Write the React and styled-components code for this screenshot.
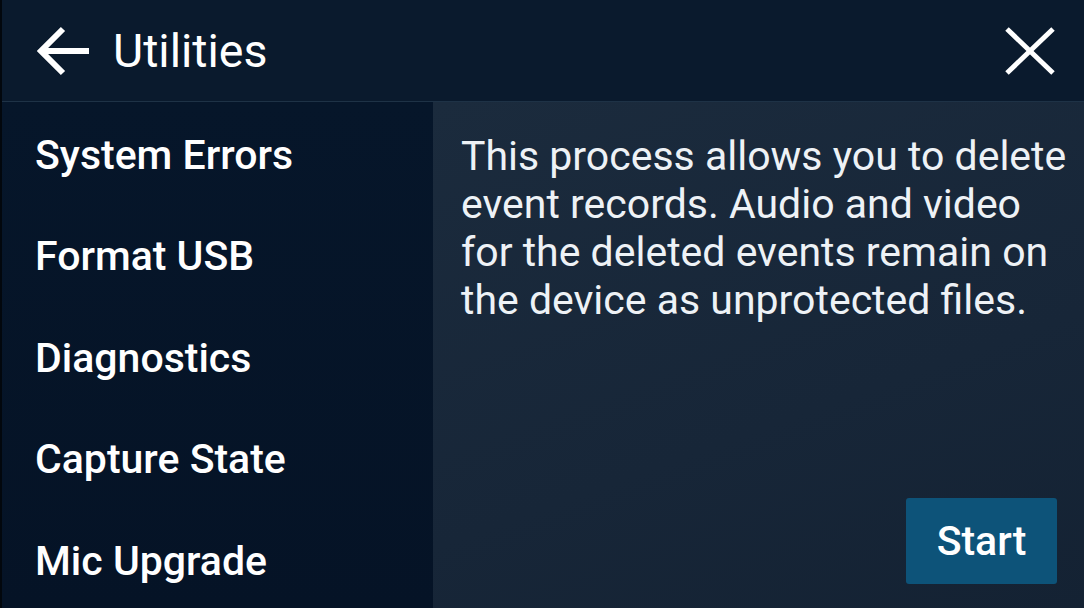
import React from 'react'
import styled, { createGlobalStyle } from 'styled-components'

const GlobalStyle = createGlobalStyle`
  html, body {
    margin: 0;
    padding: 0;
    background: #000;
  }
  body {
    font-family: Roboto, 'Liberation Sans', sans-serif;
    -webkit-font-smoothing: antialiased;
  }
`

const menuItems = ['System Errors', 'Format USB', 'Diagnostics', 'Capture State', 'Mic Upgrade']

export default function App() {
  return (
    <>
      <GlobalStyle />
      <Screen>
        <Header>
          <HeaderLeft>
            <IconButton aria-label="Back">
              <svg width="58" height="50" viewBox="0 0 58 50">
                <path d="M56 25H8M30 3L8 25l22 22" fill="none" stroke="#fff" strokeWidth="6" strokeLinecap="butt" strokeLinejoin="miter" />
              </svg>
            </IconButton>
            <Title>Utilities</Title>
          </HeaderLeft>
          <IconButton aria-label="Close">
            <svg width="52" height="50" viewBox="0 0 52 50">
              <path d="M3 3l46 44M49 3L3 47" fill="none" stroke="#fff" strokeWidth="5" />
            </svg>
          </IconButton>
        </Header>
        <Body>
          <Sidebar>
            {menuItems.map(item => (
              <MenuItem key={item}>{item}</MenuItem>
            ))}
          </Sidebar>
          <Content>
            <Description>
              This process allows you to delete event records. Audio and video for the deleted events remain on the device as unprotected files.
            </Description>
            <Actions>
              <StartButton>Start</StartButton>
            </Actions>
          </Content>
        </Body>
      </Screen>
    </>
  )
}

const Screen = styled.div`
  width: 1084px;
  height: 608px;
  display: flex;
  flex-direction: column;
  overflow: hidden;
  border-left: 2px solid #02070d;
  box-sizing: border-box;
  color: #fff;
`

const Header = styled.header`
  height: 101px;
  flex-shrink: 0;
  display: flex;
  align-items: center;
  justify-content: space-between;
  padding: 0 28px 0 31px;
  background: #0a1a2d;
  border-bottom: 1px solid #1e3246;
`

const HeaderLeft = styled.div`
  display: flex;
  align-items: center;
  gap: 22px;
`

const IconButton = styled.button`
  display: flex;
  align-items: center;
  justify-content: center;
  padding: 0;
  border: none;
  background: transparent;
  cursor: pointer;
`

const Title = styled.h1`
  margin: 0;
  font-size: 46.5px;
  font-weight: 400;
  color: #fff;
`

const Body = styled.div`
  flex: 1;
  display: flex;
  min-height: 0;
`

const Sidebar = styled.nav`
  width: 431px;
  flex-shrink: 0;
  display: flex;
  flex-direction: column;
  padding-top: 2px;
  background: linear-gradient(180deg, #06162a 0%, #051326 100%);
`

const MenuItem = styled.div`
  height: 101.5px;
  flex-shrink: 0;
  display: flex;
  align-items: center;
  padding-left: 33px;
  font-size: 41px;
  font-weight: 500;
  color: #fff;
`

const Content = styled.section`
  flex: 1;
  display: flex;
  flex-direction: column;
  padding: 30px 8px 24px 28px;
  background: linear-gradient(160deg, #1b2b3d 0%, #172638 60%, #142233 100%);
`

const Description = styled.p`
  margin: 0;
  font-size: 41px;
  line-height: 48px;
  font-weight: 400;
  color: #eef2f6;
`

const Actions = styled.div`
  margin-top: auto;
  padding-right: 19px;
  display: flex;
  justify-content: flex-end;
`

const StartButton = styled.button`
  width: 151px;
  height: 86px;
  border: none;
  border-radius: 3px;
  background: #0d5379;
  color: #fff;
  font-family: Roboto, 'Liberation Sans', sans-serif;
  font-size: 41px;
  font-weight: 500;
  cursor: pointer;
`
